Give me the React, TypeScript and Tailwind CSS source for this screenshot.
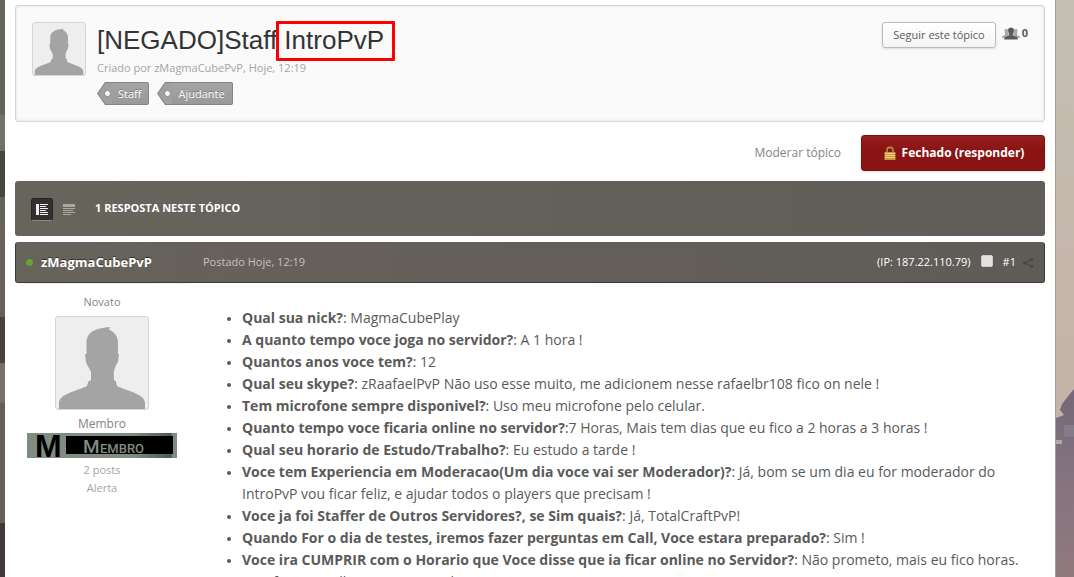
import React from 'react';

const HEAD =
  'M31.500 28 C31.500 18 36 12.500 55.700 11 C54 12 54 13 54.500 13.800 C59 16 63 20 63 27 L63 38 L64 38 L63 46 L61 49 L58.700 56 L59 64 L61 65.600 L62 70 C72 75 90 78 90 87 L90 94 L4 94 L4 87 C4 78 22 75 32 70 L33.300 65.600 L36 64 L36 56 L32.300 49 L31 46 L30 38 L31.500 38 Z';

function Avatar({ className }: { className: string }) {
  return (
    <span className={`block shrink-0 overflow-hidden rounded-[3px] border border-[#d5d5d5] bg-[#eeeeee] ${className}`}>
      <svg viewBox="1 1 92 92" className="h-full w-full">
        <path d={HEAD} fill="#a4a4a4" />
      </svg>
    </span>
  );
}

function Tag({ label }: { label: string }) {
  return (
    <a href="#" className="flex h-[23px] items-center text-[11px] text-white [text-shadow:0_-1px_0_rgba(0,0,0,0.3)]">
      <svg width="15" height="23" viewBox="0 0 15 23">
        <path d="M15 0 H8 L0 11.5 L8 23 H15 Z" fill="#848484" />
        <path d="M15 1 H8.5 L1.2 11.5 L8.5 22 H15 Z" fill="#a0a0a0" />
        <circle cx="10.500" cy="11.500" r="3" fill="#fff" stroke="#858585" />
      </svg>
      <span className="flex h-full items-center rounded-r-[2px] border border-l-0 border-[#848484] bg-gradient-to-b from-[#a5a5a5] to-[#999] pt-0.5 pr-[7px] pl-[6px]">
        {label}
      </span>
    </a>
  );
}

function PeopleIcon() {
  return (
    <svg width="18" height="13" viewBox="0 0 18 13" aria-hidden="true">
      <g fill="#aaa">
        <path d="M2.500 3 C2.500 1.500 6 1.500 6 3 V6 L7 8 V11 H0 V9.500 L3 8 Z" />
        <path d="M15.500 3 C15.500 1.500 12 1.500 12 3 V6 L11 8 V11 H18 V9.500 L15 8 Z" />
      </g>
      <path d="M6 3 C6 -0.500 12 -0.500 12 3 L11.500 6 L10.700 7.500 V8.500 L15 10 L16 12.500 H2 L3 10 L7.300 8.500 V7.500 L6.500 6 Z" fill="#595959" />
    </svg>
  );
}

function LockIcon() {
  return (
    <svg width="12" height="14" viewBox="0 0 12 14" aria-hidden="true">
      <path d="M3 7 V4 C3 0.500 9 0.500 9 4 V7" fill="none" stroke="#b98a3a" strokeWidth="1.600" />
      <rect x="0.500" y="6" width="11" height="8" fill="#c9943c" />
      <path d="M1 7.500 H11 M1 9.500 H11 M1 11.500 H11" stroke="#f0d283" />
    </svg>
  );
}

function ShareIcon() {
  return (
    <svg width="12" height="12" viewBox="0 0 12 12" aria-hidden="true">
      <path d="M10 2.500 L3 6 L10 9.500" fill="none" stroke="#474542" strokeWidth="1.200" />
      <g fill="#474542">
        <circle cx="10" cy="2.500" r="1.400" />
        <circle cx="2.500" cy="6" r="1.500" />
        <circle cx="10" cy="9.500" r="1.400" />
      </g>
    </svg>
  );
}

function MemberBadge() {
  return (
    <svg width="150" height="25" viewBox="0 0 150 25" role="img" aria-label="Membro">
      <defs>
        <linearGradient id="badge" x1="0" x2="1">
          <stop offset="0.700" stopColor="#808b82" />
          <stop offset="0.960" stopColor="#4f5852" />
          <stop offset="0.970" stopColor="#808b82" />
        </linearGradient>
      </defs>
      <rect width="150" height="25" fill="url(#badge)" />
      <rect x="39" y="3" width="107" height="18" fill="#000" />
      <text x="8" y="24" fontFamily="Liberation Sans, Arial, sans-serif" fontWeight="700" fontSize="32" fill="#000">M</text>
      <text x="56" y="20" fontFamily="Roboto, sans-serif" fontWeight="500" fontSize="19" fill="#808b82">M</text>
      <text x="73" y="20" fontFamily="Roboto, sans-serif" fontWeight="500" fontSize="13" fill="#808b82">EMBRO</text>
    </svg>
  );
}

const answers = [
  { q: 'Qual sua nick?', a: ': MagmaCubePlay' },
  { q: 'A quanto tempo voce joga no servidor?', a: ': A 1 hora !' },
  { q: 'Quantos anos voce tem?', a: ': 12' },
  { q: 'Qual seu skype?', a: ': zRaafaelPvP Não uso esse muito, me adicionem nesse rafaelbr108 fico on nele !' },
  { q: 'Tem microfone sempre disponivel?', a: ': Uso meu microfone pelo celular.' },
  { q: 'Quanto tempo voce ficaria online no servidor?', a: ':7 Horas, Mais tem dias que eu fico a 2 horas a 3 horas !' },
  { q: 'Qual seu horario de Estudo/Trabalho?', a: ': Eu estudo a tarde !' },
  {
    q: 'Voce tem Experiencia em Moderacao(Um dia voce vai ser Moderador)?',
    a: ': Já, bom se um dia eu for moderador do IntroPvP vou ficar feliz, e ajudar todos o players que precisam !',
  },
  { q: 'Voce ja foi Staffer de Outros Servidores?, se Sim quais?', a: ': Já, TotalCraftPvP!' },
  { q: 'Quando For o dia de testes, iremos fazer perguntas em Call, Voce estara preparado?', a: ': Sim !' },
  {
    q: 'Voce ira CUMPRIR com o Horario que Voce disse que ia ficar online no Servidor?',
    a: ': Não prometo, mais eu fico horas. mas farei o melhor para o servidor',
  },
];

function TopicHeader() {
  return (
    <header className="flex min-h-[117px] items-start rounded-[3px] border border-[#d5d5d5] bg-[#fafafa] px-4 pt-4 shadow-[inset_0_0_3px_rgba(0,0,0,0.12)]">
      <Avatar className="h-[54px] w-[54px]" />
      <div className="ml-[11px] flex-1">
        <h1 className="flex h-[37px] items-center whitespace-pre pb-0.5 font-['Liberation_Sans',Arial,sans-serif] text-[26px] leading-[36px] text-[#333]">
          [NEGADO]Staff
          <span className="relative">
            {' IntroPvP'}
            <span className="absolute -top-px -right-[11px] -left-px h-10 rounded-[1px] border-[3px] border-[#ff0000]" />
          </span>
        </h1>
        <p className="text-[11px] leading-[18px] text-[#a4a4a4]">Criado por zMagmaCubePvP, Hoje, 12:19</p>
        <div className="mt-[5px] flex gap-2">
          <Tag label="Staff" />
          <Tag label="Ajudante" />
        </div>
      </div>
      <button className="h-[26px] rounded-[3px] border border-[#bbb] bg-gradient-to-b from-white to-[#f5f5f5] px-2.5 text-[11px] text-[#5a5a5a] shadow-sm">
        Seguir este tópico
      </button>
      <span className="ml-[6px] flex h-[22px] items-center gap-[2px] text-[11px] font-bold text-[#5a5a5a]">
        <PeopleIcon />0
      </span>
    </header>
  );
}

function TopicActions() {
  return (
    <div className="mt-[13px] flex items-center justify-end gap-5">
      <a href="#" className="text-[12px] text-[#848484]">Moderar tópico</a>
      <button className="flex h-9 w-[184px] items-center justify-center gap-1.5 rounded-[3px] border border-[#7c1010] bg-gradient-to-b from-[#942020] to-[#8a1414] to-40% pl-0.5 text-[12px] font-bold text-white shadow-sm">
        <LockIcon />
        Fechado (responder)
      </button>
    </div>
  );
}

function RepliesBar() {
  return (
    <div className="mt-[10px] flex h-[55px] items-center rounded-[3px] bg-gradient-to-r from-[#66645b] to-[#605d58] px-4">
      <button aria-label="Modo padrão" className="mt-0.5 flex h-[23px] w-[22px] items-center justify-center rounded-[3px] border border-[#252421] border-b-[#8a8880] bg-[#32302e]">
        <svg width="12" height="12" viewBox="0 0 12 12" fill="#eee">
          <path d="M0 0h3v11H0zM4 0h8v1H4zM4 2h6v1H4zM4 4h8v1H4zM4 6h6v1H4zM4 8h8v1H4zM4 10h8v1H4z" />
        </svg>
      </button>
      <button aria-label="Modo linear" className="mt-0.5 ml-[10px]">
        <svg width="12" height="11" viewBox="0 0 12 11" fill="#aaa8a3">
          <path d="M0 0h12v3H0zM0 4h12v1H0zM0 6h10v1H0zM0 8h12v1H0zM0 10h8v1H0z" />
        </svg>
      </button>
      <h2 className="ml-5 text-[11px] font-bold text-white">1 RESPOSTA NESTE TÓPICO</h2>
    </div>
  );
}

function Post() {
  return (
    <article>
      <div className="mt-[6px] flex h-[41px] items-center rounded-[3px] border border-[#3c3b38] border-t-[#605e57] bg-gradient-to-r from-[#66645b] via-[#67605b] via-20% to-[#5f5c58] px-[10px]">
        <span className="h-[7px] w-[7px] rounded-full bg-[#65a52f]" />
        <a href="#" className="ml-2 w-[162px] text-[13px] font-bold text-white [text-shadow:0_-1px_0_rgba(0,0,0,0.5)]">zMagmaCubePvP</a>
        <span className="flex-1 text-[11px] text-[#c4c2be]">Postado Hoje, 12:19</span>
        <label htmlFor="select-post" className="text-[11px] text-white">(IP: 187.22.110.79)</label>
        <input
          id="select-post"
          type="checkbox"
          className="mb-1 ml-[10px] h-3 w-3 appearance-none rounded-[2px] border border-[#ccc] bg-[#e2e2e2]"
        />
        <a href="#" className="mr-[6px] ml-[10px] text-[11px] text-white">#1</a>
        <ShareIcon />
      </div>
      <div className="flex">
        <aside className="flex w-[174px] shrink-0 flex-col items-center border-t border-[#f5f5f5] pt-[10px] text-[11px] leading-[18px] text-[#848484]">
          <span className="leading-[16px]">Novato</span>
          <Avatar className="mt-[6px] h-[94px] w-[94px]" />
          <span className="mt-[5px] text-[12px]">Membro</span>
          <MemberBadge />
          <span className="mt-[3px] text-[#a4a4a4]">2 posts</span>
          <a href="#" className="text-[#a4a4a4]">Alerta</a>
        </aside>
        <ul className="mt-[24px] mr-5 ml-[53px] flex-1 list-disc text-[14px] leading-[22px] text-[#5a5a5a] marker:text-[11px]">
          {answers.map((item) => (
            <li key={item.q}>
              <strong>{item.q}</strong>
              {item.a}
            </li>
          ))}
        </ul>
      </div>
    </article>
  );
}

export default function App() {
  return (
    <div className="flex h-screen overflow-hidden font-['Open_Sans',sans-serif]">
      <div className="flex w-[5px] shrink-0 flex-col">
        <div className="h-[115px] bg-gradient-to-b from-[#68635f] to-[#65635a]" />
        <div className="h-9 bg-[#74716a]" />
        <div className="h-[46px] bg-[#484640]" />
        <div className="h-[120px] bg-gradient-to-b from-[#65635a] to-[#68605b]" />
        <div className="h-[46px] bg-[#49433f]" />
        <div className="h-10 bg-[#75706a]" />
        <div className="h-[120px] bg-[#675e58]" />
        <div className="flex-1 bg-[#3f3a37]" />
      </div>
      <main className="min-w-0 flex-1 bg-white px-[10px] pt-[5px]">
        <TopicHeader />
        <TopicActions />
        <RepliesBar />
        <Post />
      </main>
      <div className="w-[19px] shrink-0 border-l border-[#a39d92] bg-gradient-to-b from-[#c4c0b3] via-[#c5b5ab] via-50% to-[#bfb0a3]">
        <svg className="h-full w-full" viewBox="0 0 18 577" preserveAspectRatio="none">
          <defs>
            <linearGradient id="rock" x1="0" x2="0" y1="0" y2="1">
              <stop offset="0" stopColor="#73687a" />
              <stop offset="0.500" stopColor="#85747f" />
              <stop offset="1" stopColor="#8f7a7e" />
            </linearGradient>
          </defs>
          <path d="M18 389 L13 395 L6 404 L4 410 L8 415 L0 418 V577 H18 Z" fill="url(#rock)" />
          <path d="M0 440 h6 v4 h-6 z" fill="#b5a6a2" />
          <path d="M8 425 h10 v12 h-10 z" fill="#857c8a" />
        </svg>
      </div>
    </div>
  );
}
